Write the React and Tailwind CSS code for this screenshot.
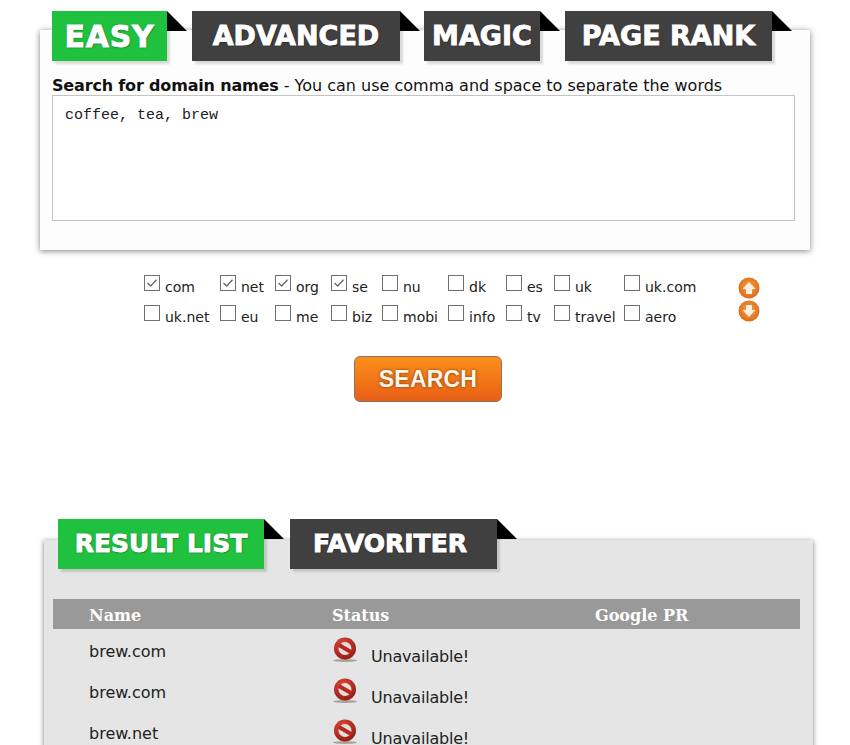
import React from 'react';

const SANS = "font-['DejaVu_Sans',Verdana,sans-serif]";

const row1 = [
  ['com', true], ['net', true], ['org', true], ['se', true], ['nu'], ['dk'], ['es'], ['uk'], ['uk.com'],
];
const row2 = [
  ['uk.net'], ['eu'], ['me'], ['biz'], ['mobi'], ['info'], ['tv'], ['travel'], ['aero'],
];
const results = ['brew.com', 'brew.com', 'brew.net'];

function Tab({ label, active, width, size }) {
  return (
    <div className={`relative h-[50px] flex items-center justify-center shadow-[3px_3px_2px_rgba(0,0,0,0.14)] ${width} ${active ? 'bg-[#1fc13f]' : 'bg-[#404040]'}`}>
      <span className={`font-['DejaVu_Sans',sans-serif] font-bold whitespace-nowrap text-white [-webkit-text-stroke:0.9px_#fff] [text-shadow:0_0_2px_rgba(0,0,0,0.45),1px_1px_1px_rgba(0,0,0,0.35)] ${size}`}>
        {label}
      </span>
      {/* folded corner */}
      <svg className="absolute left-full top-0" width="20" height="20" viewBox="0 0 20 20">
        <path d="M0 0 L20 20 L0 20 Z" fill="#000" />
      </svg>
    </div>
  );
}

function Box({ checked }) {
  return (
    <span className="w-4 h-4 mt-[-2px] shrink-0 border border-[#707070] bg-white flex items-center justify-center">
      {checked && (
        <svg width="12" height="12" viewBox="0 0 12 12" fill="none">
          <path d="M1.5 6 L4.7 9 L10.5 2.8" stroke="#666" strokeWidth="1.3" />
        </svg>
      )}
    </span>
  );
}

function Option({ label, checked }) {
  return (
    <label className="flex items-center gap-[5px] h-[30px]">
      <Box checked={checked} />
      <span className="text-[14px] text-[#222] pt-[5px] leading-none whitespace-nowrap">{label}</span>
    </label>
  );
}

function ArrowBall({ down }) {
  const id = down ? 'ballDown' : 'ballUp';
  return (
    <svg width="22" height="22" viewBox="0 0 22 22" className="block">
      <defs>
        <radialGradient id={id} cx="50%" cy="45%" r="55%">
          <stop offset="0%" stopColor="#f7a548" />
          <stop offset="100%" stopColor="#dc6a18" />
        </radialGradient>
      </defs>
      <circle cx="11" cy="11" r="10.5" fill={`url(#${id})`} />
      <path
        d={down ? 'M8 5 H14 V10 H17.5 L11 17 L4.5 10 H8 Z' : 'M8 17 H14 V12 H17.5 L11 5 L4.5 12 H8 Z'}
        fill="#fbeee2"
      />
    </svg>
  );
}

function NoEntry() {
  return (
    <svg width="26" height="26" viewBox="0 0 26 26" className="block">
      <defs>
        <radialGradient id="noRed" cx="40%" cy="30%" r="75%">
          <stop offset="0%" stopColor="#e04a3c" />
          <stop offset="100%" stopColor="#8e1c14" />
        </radialGradient>
      </defs>
      <ellipse cx="13" cy="23.5" rx="12" ry="1.4" fill="#a9a294" />
      <circle cx="13" cy="11.5" r="11" fill="url(#noRed)" />
      <circle cx="13" cy="11.5" r="6.5" fill="#e8dcd8" />
      <path d="M7 8 L19 15" stroke="#b32a20" strokeWidth="4" />
    </svg>
  );
}

export default function App() {
  return (
    <div className={`h-[745px] w-[850px] overflow-hidden bg-white ${SANS}`}>
      {/* Search panel */}
      <div className="pt-[30px] pl-10">
        <div className="flow-root w-[770px] h-[220px] bg-[#fdfdfd] shadow-[0_1px_6px_rgba(0,0,0,0.5)] px-3">
          <div className="flex -mt-[19px] gap-[25px]">
            <Tab label="EASY" active width="w-[115px]" size="text-[30px] tracking-[0.8px]" />
            <Tab label="ADVANCED" width="w-[208px]" size="text-[27px]" />
            <div className="-ml-[1px]"><Tab label="MAGIC" width="w-[116px]" size="text-[27px]" /></div>
            <Tab label="PAGE RANK" width="w-[207px]" size="text-[27px]" />
          </div>
          <p className="mt-[15px] text-[16px] leading-[19px] text-[#111] whitespace-nowrap">
            <strong className="font-bold tracking-[-0.17px]">Search for domain names</strong> - You can use comma and space to separate the words
          </p>
          <div className="h-[126px] w-[743px] border border-[#c4c4c4] bg-white px-3 pt-[11px] font-['Liberation_Mono',monospace] text-[15px] leading-[17px] text-[#222]">
            coffee, tea, brew
          </div>
        </div>
      </div>

      {/* TLD options */}
      <div className="flex mt-[19px] ml-[144px]">
        <div className="grid grid-cols-[76px_55px_56px_51px_66px_58px_48px_70px_80px]">
          {[...row1, ...row2].map(([label, checked], i) => (
            <Option key={i} label={label} checked={checked} />
          ))}
        </div>
        <div className="ml-[34px] mt-[8px] flex flex-col gap-[1px]">
          <ArrowBall />
          <ArrowBall down />
        </div>
      </div>

      <div className="flex justify-center pl-[6px] mt-[27px]">
        <button className="w-[148px] h-[46px] rounded-md border border-[#8a7466] bg-gradient-to-b from-[#fb8f1a] to-[#e85f16] font-['Liberation_Sans',sans-serif] font-bold text-[23px] tracking-[0.2px] text-[#fff6ea] [text-shadow:0_0_3px_rgba(90,40,0,0.8)]">
          SEARCH
        </button>
      </div>

      {/* Results panel */}
      <div className="mt-[138px] pl-11">
        <div className="flow-root w-[769px] h-[300px] bg-[#e5e5e5] shadow-[0_1px_5px_rgba(0,0,0,0.5)] pl-[9px]">
          <div className="flex -mt-[21px] ml-[5px] gap-[26px]">
            <Tab label="RESULT LIST" active width="w-[206px]" size="text-[25px]" />
            <Tab label="FAVORITER" width="w-[207px] pr-[7px]" size="text-[25px]" />
          </div>
          <div className="mt-[30px] w-[747px] h-[30px] bg-[#999] grid grid-cols-[243px_263px_1fr] pl-9 pt-[3px] items-center font-['DejaVu_Serif',serif] font-bold text-[16px] text-white">
            <span>Name</span>
            <span>Status</span>
            <span>Google PR</span>
          </div>
          {results.map((name, i) => (
            <div key={i} className="h-[41px] w-[747px] grid grid-cols-[243px_1fr] pl-9 items-start">
              <span className="pt-[13px] text-[16px] leading-5 text-[#222]">{name}</span>
              <span className="flex pt-[8px]">
                <NoEntry />
                <span className="pl-[13px] pt-[10px] text-[16px] tracking-[-0.2px] leading-5 text-[#222]">Unavailable!</span>
              </span>
            </div>
          ))}
        </div>
      </div>
    </div>
  );
}
